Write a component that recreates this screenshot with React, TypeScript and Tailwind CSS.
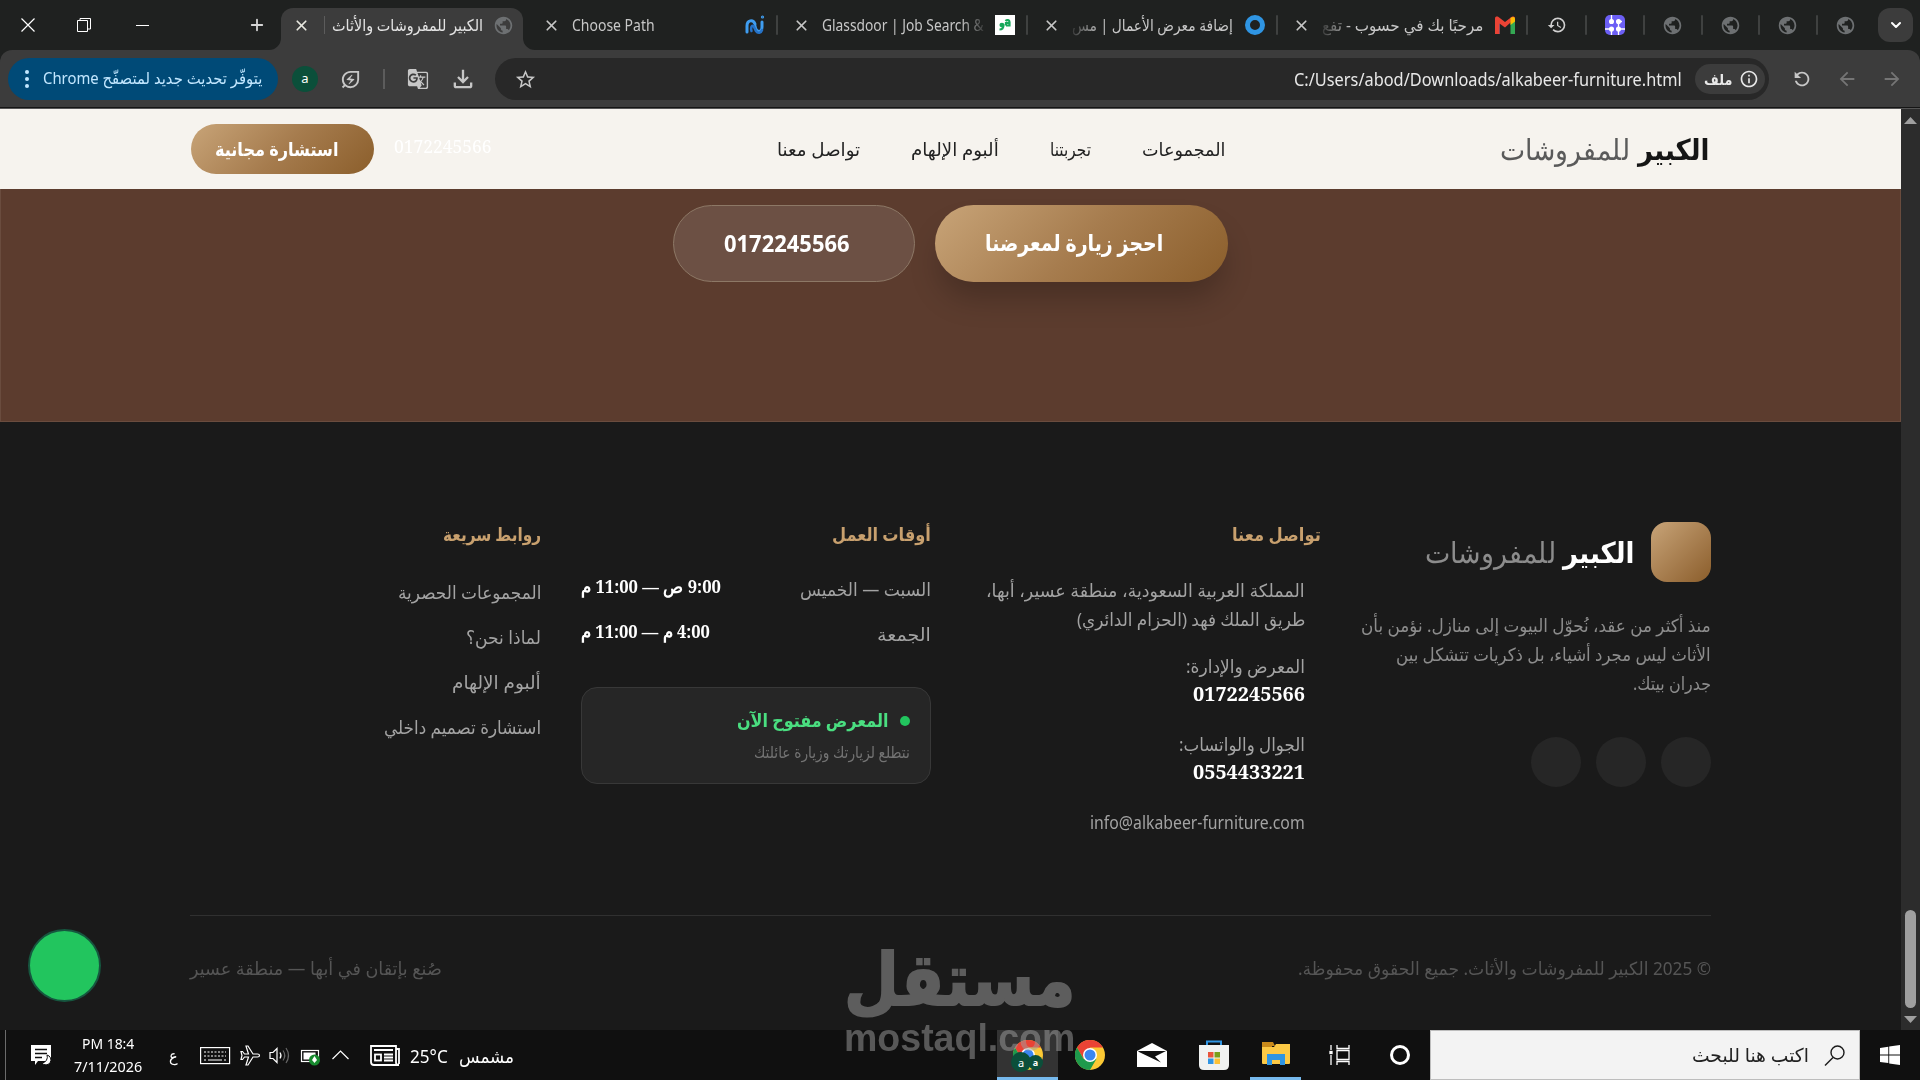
import React, { useLayoutEffect, useRef, useState } from 'react';
import {
  MdArrowBack,
  MdArrowForward,
  MdGTranslate,
  MdHistory,
  MdInfoOutline,
  MdOutlineEnergySavingsLeaf,
  MdOutlineFileDownload,
  MdPublic,
  MdRefresh,
  MdStarBorder,
} from 'react-icons/md';
import { ChevronDown, Plus, X } from 'lucide-react';

type FitProps = { className?: string; dir?: 'rtl' | 'ltr'; children: React.ReactNode };

// single line of text squeezed or stretched to the width of its box
const Fit: React.FC<FitProps> = ({ className = '', dir = 'rtl', children }) => {
  const box = useRef<HTMLSpanElement>(null);
  const inner = useRef<HTMLSpanElement>(null);
  const [ratio, setRatio] = useState(1);

  useLayoutEffect(() => {
    if (box.current && inner.current && inner.current.offsetWidth > 0) {
      setRatio(box.current.offsetWidth / inner.current.offsetWidth);
    }
  }, []);

  return (
    <span ref={box} dir={dir} className={`block shrink-0 whitespace-nowrap ${className}`}>
      <span
        ref={inner}
        className={`inline-block ${dir === 'rtl' ? 'origin-right' : 'origin-left'}`}
        style={{ transform: `scaleX(${ratio})` }}
      >
        {children}
      </span>
    </span>
  );
};

const Separator = () => <span className="h-5 w-0.5 shrink-0 rounded bg-[#3f4140]" />;

type TabProps = { icon: React.ReactNode; children: React.ReactNode };

const Tab: React.FC<TabProps> = ({ icon, children }) => (
  <div className="flex h-[50px] w-[248px] shrink-0 items-center pl-[15px] text-[#c7c7c7]">
    <X size={17} strokeWidth={2.4} className="mr-[12px] shrink-0" />
    <div className="flex w-[164px] shrink-0 overflow-hidden">{children}</div>
    <div className="ml-[7px] flex w-6 shrink-0 justify-center">{icon}</div>
  </div>
);

const GmailIcon = () => (
  <svg width="20" height="18" viewBox="0 0 20 18">
    <path d="M0 3v15h4.5V7z" fill="#4285f4" />
    <path d="M15.500 6.500L20 3v15h-4.500z" fill="#34a853" />
    <path d="M0 2.500C0 .5 2 0 3.500 1L10 6l6.500-5C18 0 20 .5 20 2.500L10 11.500 4.500 7.500V18H0z" fill="#ea4335" />
    <path d="M15.500 1.800Q20-.5 20 3v2.500l-4.500 3.500z" fill="#fbbc04" />
  </svg>
);

const NIcon = () => (
  <svg width="20" height="20" viewBox="0 0 20 20" fill="none" strokeLinecap="round">
    <path d="M2 17v-6c0-6 6-7 8-2M10 11c1 7 7 7 7 1V7" stroke="#3f9df0" strokeWidth="3" />
    <path d="M6.500 16c-1-3 0-6 2-5l2.500 5c2 3 5 2 6-1" stroke="#2673c8" strokeWidth="2.500" />
    <circle cx="17.500" cy="2" r=".6" stroke="#3f9df0" strokeWidth="2" />
  </svg>
);

const NodesIcon = () => (
  <svg width="20" height="20" viewBox="0 0 20 20">
    <rect width="20" height="20" rx="5" fill="#6c5ff5" />
    <g stroke="#fff" strokeWidth="1.300" fill="#fff">
      <path d="M6.500 0v6.500M6.500 14v6M13.500 6.500V20M0 14h6.500M13.500 14H20M13.500 6.500H17" fill="none" />
      <circle cx="6.500" cy="6.500" r="1.900" />
      <circle cx="13.500" cy="6.500" r="1.900" />
      <circle cx="6.500" cy="14" r="1.900" />
      <circle cx="13.500" cy="14" r="1.900" />
    </g>
  </svg>
);

const TabStrip = () => (
  <div className="flex h-[50px] shrink-0 items-center bg-[#1f2120]">
    <div className="flex w-14 shrink-0 justify-center">
      <svg width="14" height="14" viewBox="0 0 14 14" stroke="#fff" strokeWidth="1.200">
        <path d="M.5.5l13 13M13.500.5L.5 13.500" />
      </svg>
    </div>
    <div className="flex w-14 shrink-0 justify-center">
      <svg width="14" height="14" viewBox="0 0 14 14" stroke="#fff" fill="none">
        <path d="M.5 2.500h10v11H.5zM3 2.500V.5h10.500v10.500H10.500" />
      </svg>
    </div>
    <div className="flex w-[60px] shrink-0 justify-center">
      <span className="h-px w-[13px] bg-white" />
    </div>
    <div className="flex w-[109px] shrink-0 justify-end pr-[15px]">
      <Plus size={18} strokeWidth={2.4} className="text-[#d5d5d5]" />
    </div>
    <div className="relative flex h-[42px] w-[242px] shrink-0 items-center self-end rounded-t-[12px] bg-[#3c3c3c] pb-2 pl-[12px] text-white">
      <svg className="absolute bottom-0 -left-[12px]" width="12" height="12">
        <path d="M12 0v12H0A12 12 0 0 0 12 0z" fill="#3c3c3c" />
      </svg>
      <svg className="absolute -right-[12px] bottom-0" width="12" height="12">
        <path d="M0 0v12h12A12 12 0 0 1 0 0z" fill="#3c3c3c" />
      </svg>
      <X size={17} strokeWidth={2.4} className="shrink-0 text-[#e8e8e0]" />
      <span className="ml-[14px] h-[18px] w-px bg-[#5c5c5c]" />
      <Fit className="ml-[7px] w-[151px] text-[16px] text-[#e3e3e3]">الكبير للمفروشات والأثاث</Fit>
      <MdPublic size={21} className="ml-[10px] shrink-0 text-[#6d7072]" />
    </div>
    <div className="flex shrink-0 items-center pl-[5px]">
      <Tab icon={<NIcon />}>
        <Fit dir="ltr" className="w-[83px] text-[16px]">
          Choose Path
        </Fit>
      </Tab>
      <Separator />
      <Tab
        icon={
          <span className="flex h-5 w-5 items-center justify-center bg-white">
            <svg width="14" height="14" viewBox="0 0 14 14" fill="none" stroke="#17a85b" strokeWidth="2.200">
              <path d="M1.500 11.500c3 0 4-2 4-4.500 0-1.500-3-1.500-3 0s3 1.500 3 0M8 7.500h3.500V4c0-2-2.500-2.500-4-1M8 7.500V5h3" />
            </svg>
          </span>
        }
      >
        <Fit
          dir="ltr"
          className="w-[162px] [mask-image:linear-gradient(to_right,#000_86%,rgba(0,0,0,0.15))] text-[16px]"
        >
          Glassdoor | Job Search &amp;
        </Fit>
      </Tab>
      <Separator />
      <Tab icon={<span className="h-5 w-5 rounded-full border-[5px] border-[#2f95e3]" />}>
        <Fit className="w-[161px] [mask-image:linear-gradient(to_left,#000_82%,rgba(0,0,0,0.15))] text-[16px]">
          إضافة معرض الأعمال | مس
        </Fit>
      </Tab>
      <Separator />
      <Tab icon={<GmailIcon />}>
        <Fit className="w-[161px] [mask-image:linear-gradient(to_left,#000_82%,rgba(0,0,0,0.15))] text-[16px]">
          مرحبًا بك في حسوب - تفع
        </Fit>
      </Tab>
      <Separator />
    </div>
    <div className="flex shrink-0 items-center pl-px">
      <span className="flex w-[56px] justify-center">
        <MdHistory size={20} className="text-[#d0d0d0]" />
      </span>
      <Separator />
      <span className="flex w-[56px] justify-center">
        <NodesIcon />
      </span>
      {[0, 1, 2, 3].map((i) => (
        <React.Fragment key={i}>
          <Separator />
          <span className="flex w-[55.5px] justify-center">
            <MdPublic size={21} className="text-[#6d7072]" />
          </span>
        </React.Fragment>
      ))}
    </div>
    <div className="mr-[7px] ml-auto flex h-[34px] w-[35px] shrink-0 items-center justify-center rounded-[12px] bg-[#3c3c3c]">
      <ChevronDown size={16} strokeWidth={3} className="text-white" />
    </div>
  </div>
);

const Toolbar = () => (
  <div className="h-[59px] shrink-0 bg-[#1f2120]">
    <div className="flex h-[59px] items-center rounded-t-[12px] border-b border-[#555] bg-[#3c3c3c] pl-2 text-[#c7c7c7] shadow-[inset_0_-1px_0_#151515]">
      <div className="flex h-[42px] w-[270px] shrink-0 items-center rounded-full bg-[#004a77] pl-[17px]">
        <div className="flex flex-col gap-[3px]">
          <span className="h-1 w-1 rounded-full bg-[#c2e7ff]" />
          <span className="h-1 w-1 rounded-full bg-[#c2e7ff]" />
          <span className="h-1 w-1 rounded-full bg-[#c2e7ff]" />
        </div>
        <Fit className="ml-[14px] w-[219px] pb-0.5 text-[16px] text-[#c2e7ff]">يتوفّر تحديث جديد لمتصفّح Chrome</Fit>
      </div>
      <span className="ml-[14px] flex h-[26px] w-[26px] shrink-0 items-center justify-center rounded-full bg-[#0b4f3a] pb-px text-[13px] text-white">
        a
      </span>
      <MdOutlineEnergySavingsLeaf size={23} className="ml-[21px] shrink-0" />
      <span className="ml-[21px] h-5 w-0.5 shrink-0 bg-[#5c5c5c]" />
      <MdGTranslate size={22} className="ml-[22px] shrink-0" />
      <MdOutlineFileDownload size={28} className="ml-[20px] shrink-0" />
      <div className="ml-[18px] flex h-[42px] w-[1274px] shrink-0 items-center rounded-full bg-[#282828] pl-[19px]">
        <MdStarBorder size={23} className="shrink-0" />
        <Fit dir="ltr" className="ml-[757px] w-[388px] text-[18px] text-[#e8e8e8]">
          C:/Users/abod/Downloads/alkabeer-furniture.html
        </Fit>
        <div className="ml-[13px] flex h-[30px] w-[70px] items-center rounded-full bg-[#3c3c3c] pl-[9px] text-[#e8e8e8]">
          <Fit className="w-[28px] text-[15px] font-bold">ملف</Fit>
          <MdInfoOutline size={20} className="ml-[7px]" />
        </div>
      </div>
      <MdRefresh size={22} className="ml-[22px] shrink-0 -scale-x-100" />
      <MdArrowBack size={22} className="ml-[23px] shrink-0 text-[#757575]" />
      <MdArrowForward size={22} className="ml-[23px] shrink-0 text-[#757575]" />
    </div>
  </div>
);

const SiteHeader = () => (
  <header dir="rtl" className="flex h-20 items-center bg-[#f6f3ee] pr-[192px]">
    <div className="flex w-[209px] shrink-0 items-center gap-2 text-[29px]">
      <Fit className="w-[71px] font-bold text-[#151515]">الكبير</Fit>
      <Fit className="w-[130px] font-extralight text-[#5a5a5a]">للمفروشات</Fit>
    </div>
    <nav className="mr-[275px] flex shrink-0 gap-[51px] pt-px text-[18px] text-[#222]">
      <Fit className="w-[83px]">المجموعات</Fit>
      <Fit className="w-[41px]">تجربتنا</Fit>
      <Fit className="w-[88px]">ألبوم الإلهام</Fit>
      <Fit className="w-[83px]">تواصل معنا</Fit>
    </nav>
    <Fit
      dir="ltr"
      className="mr-[285px] w-[98px] pb-[5px] font-['Noto_Serif','DejaVu_Serif',serif] text-[18px] text-white"
    >
      0172245566
    </Fit>
    <div className="mr-5 flex h-[50px] w-[183px] shrink-0 items-center rounded-full bg-[linear-gradient(135deg,#c8a478,#a67c4e_50%,#8b5e2b)] pr-[35px]">
      <Fit className="w-[124px] text-[19px] font-bold text-white">استشارة مجانية</Fit>
    </div>
  </header>
);

const CallToAction = () => (
  <section
    dir="rtl"
    className="flex h-[233px] items-start border-x border-b border-[#6a4c3e] bg-[#5c3c2e] pt-4 pr-[672px] text-[23px] font-bold text-white"
  >
    <div className="flex h-[77px] w-[293px] shrink-0 items-center rounded-full bg-[linear-gradient(135deg,#c8a478,#a67c4e_50%,#8b5e2b)] pr-[65px] pb-0.5 shadow-[0_20px_30px_-4px_rgba(0,0,0,0.22)]">
      <Fit className="w-[178px]">احجز زيارة لمعرضنا</Fit>
    </div>
    <div className="mr-5 flex h-[77px] w-[242px] shrink-0 items-center rounded-full border border-[#8d7866] bg-[#6c5044] pr-[64px]">
      <Fit dir="ltr" className="w-[126px]">
        0172245566
      </Fit>
    </div>
  </section>
);

const serifBold = "font-['Noto_Serif','DejaVu_Serif',serif] font-bold text-white";

const Brand = () => (
  <div className="w-[390px] shrink-0">
    <div className="flex h-[60px] items-center">
      <span className="h-[60px] w-[60px] rounded-2xl bg-gradient-to-br from-[#c8a478] to-[#8b5e2b]" />
      <Fit className="mr-[17px] w-[71px] text-[29px] font-bold text-white">الكبير</Fit>
      <Fit className="mr-[7px] w-[131px] text-[29px] font-extralight text-[#8c8c8c]">للمفروشات</Fit>
    </div>
    <div className="mt-[29px] flex flex-col text-[18px] leading-[29px] text-[#8c8c8c]">
      <Fit className="w-[350px]">منذ أكثر من عقد، نُحوّل البيوت إلى منازل. نؤمن بأن</Fit>
      <Fit className="w-[315px]">الأثاث ليس مجرد أشياء، بل ذكريات تتشكل بين</Fit>
      <Fit className="w-[78px]">جدران بيتك.</Fit>
    </div>
    <div className="mt-[39px] flex gap-[15px]">
      <span className="h-[50px] w-[50px] rounded-full bg-[#262626]" />
      <span className="h-[50px] w-[50px] rounded-full bg-[#262626]" />
      <span className="h-[50px] w-[50px] rounded-full bg-[#262626]" />
    </div>
  </div>
);

const Contact = () => (
  <div className="-mt-0.5 w-[390px] shrink-0 text-[18px] leading-[29px] text-[#a3a3a3]">
    <Fit className="w-[89px] font-bold text-[#c8a06e]">تواصل معنا</Fit>
    <div className="mt-[27px] pr-4">
      <Fit className="w-[319px]">المملكة العربية السعودية، منطقة عسير، أبها،</Fit>
      <Fit className="w-[228px]">طريق الملك فهد (الحزام الدائري)</Fit>
      <Fit className="mt-[18px] w-[119px]">المعرض والإدارة:</Fit>
      <Fit dir="ltr" className={`w-[112px] text-[20px] leading-[25px] ${serifBold}`}>
        0172245566
      </Fit>
      <Fit className="mt-[24px] w-[126px]">الجوال والواتساب:</Fit>
      <Fit dir="ltr" className={`w-[112px] text-[20px] leading-[25px] ${serifBold}`}>
        0554433221
      </Fit>
      <Fit dir="ltr" className="mt-[24px] w-[215px]">
        info@alkabeer-furniture.com
      </Fit>
    </div>
  </div>
);

const Hours = () => (
  <div className="-mt-0.5 w-[390px] shrink-0 pl-[40px] text-[18px] leading-[29px] text-[#a3a3a3]">
    <Fit className="w-[99px] font-bold text-[#c8a06e]">أوقات العمل</Fit>
    <div className="mt-[26px] flex h-[29px] items-center justify-between">
      <Fit className="w-[131px]">السبت — الخميس</Fit>
      <Fit className={`w-[140px] pb-[6px] text-[18px] ${serifBold}`}>9:00 ص — 11:00 م</Fit>
    </div>
    <div className="mt-4 flex h-[29px] items-center justify-between">
      <Fit className="w-[54px]">الجمعة</Fit>
      <Fit className={`w-[129px] pb-[6px] text-[18px] ${serifBold}`}>4:00 م — 11:00 م</Fit>
    </div>
    <div className="mt-[38px] h-[97px] w-[350px] rounded-2xl border border-[#383838] bg-[#262626] pt-[18px] pr-[20px]">
      <div className="flex items-center gap-[11px]">
        <span className="h-[10px] w-[10px] rounded-full bg-[#22c55e]" />
        <Fit className="w-[152px] font-bold text-[#4ade80]">المعرض مفتوح الآن</Fit>
      </div>
      <Fit className="mt-[4px] w-[156px] text-[16px] leading-[26px] text-[#737373]">نتطلع لزيارتك وزيارة عائلتك</Fit>
    </div>
  </div>
);

const QuickLinks = () => (
  <div className="-mt-0.5 shrink-0 text-[18px] leading-[29px] text-[#a3a3a3]">
    <Fit className="w-[98px] font-bold text-[#c8a06e]">روابط سريعة</Fit>
    <div className="mt-[29px] flex flex-col gap-4">
      <Fit className="w-[143px]">المجموعات الحصرية</Fit>
      <Fit className="w-[75px]">لماذا نحن؟</Fit>
      <Fit className="w-[89px]">ألبوم الإلهام</Fit>
      <Fit className="w-[157px]">استشارة تصميم داخلي</Fit>
    </div>
  </div>
);

const Footer = () => (
  <footer dir="rtl" className="h-[608px] bg-[#1a1a1a] px-[190px] pt-[100px]">
    <div className="flex h-[393px]">
      <Brand />
      <Contact />
      <Hours />
      <QuickLinks />
    </div>
    <div className="flex h-[106px] items-center justify-between border-t border-[#303030] text-[18px] text-[#555]">
      <Fit className="w-[413px]">© 2025 الكبير للمفروشات والأثاث. جميع الحقوق محفوظة.</Fit>
      <Fit className="w-[252px]">صُنع بإتقان في أبها — منطقة عسير</Fit>
    </div>
  </footer>
);

const Scrollbar = () => (
  <div className="flex w-[19px] shrink-0 flex-col items-center bg-[#2c2c2c] pt-2 pb-[7px]">
    <svg width="13" height="7">
      <path d="M0 7h13L6.500 0z" fill="#9f9f9f" />
    </svg>
    <span className="mt-auto h-[98px] w-[11px] rounded-full bg-[#9f9f9f]" />
    <svg className="mt-2" width="13" height="7">
      <path d="M0 0h13L6.500 7z" fill="#9f9f9f" />
    </svg>
  </div>
);

const ChromeIcon = () => (
  <svg width="30" height="30" viewBox="0 0 30 30">
    <circle cx="15" cy="15" r="15" fill="#fcc934" />
    <path d="M2 7.500A15 15 0 0 1 28 7.500H15L8.500 18.700z" fill="#ea4335" />
    <path d="M2 7.500A15 15 0 0 0 15 30l6.500-11.300H8.500z" fill="#1e9a4c" />
    <circle cx="15" cy="15" r="7" fill="#fff" />
    <circle cx="15" cy="15" r="5.500" fill="#3b86f0" />
  </svg>
);

const TrayIcons = () => (
  <svg width="150" height="24" viewBox="0 0 150 24" fill="none" stroke="#fff" strokeWidth="1.200">
    {/* keyboard */}
    <rect x=".6" y="4.600" width="29" height="16" />
    <path d="M4 9h22M4 13h22" strokeDasharray="2 1.500" />
    <path d="M4 17h2M8 17h14M24 17h2" />
    {/* airplane */}
    <path d="M59.500 12.500c0-1-1-1.500-2-1.500h-4.500l-5-8h-2l2.500 8h-4l-2-2.500h-1.500l1 4-1 4h1.500l2-2.500h4L46 22h2l5-8h4.500c1 0 2-.5 2-1.500z" />
    {/* volume */}
    <path d="M70 9.500h3l4-4v14l-4-4h-3zM80 9.500q2 3 0 6" />
    <path d="M83 7.500q3.500 5 0 10M86 5q5 7.500 0 15" stroke="#666" />
    {/* battery */}
    <rect x="101.500" y="7.500" width="17" height="11" />
    <rect x="103.500" y="9.500" width="12" height="7" fill="#fff" stroke="none" />
    <circle cx="114.500" cy="17" r="5.500" fill="#178a2e" stroke="none" />
    <path d="M114.500 13l2.500 4-2.500 3-2.500-3z" fill="#fff" stroke="none" />
    {/* overflow chevron */}
    <path d="M132.500 16l8-8 8 8" />
  </svg>
);

const Taskbar = () => (
  <div className="flex h-[50px] shrink-0 items-center bg-[#101010] text-white">
    <span className="ml-[5px] h-full w-px shrink-0 bg-[#6b6b6b]" />
    <svg className="ml-[25px] shrink-0" width="21" height="22" viewBox="0 0 21 22">
      <path d="M0 1h20v16H7l-3 4v-4H0z" fill="#fff" />
      <path d="M4 5.500h12M4 9.500h12M4 13.500h7" stroke="#101010" strokeWidth="1.300" />
      <path d="M16 11a5 5 0 1 1-5 8 6 6 0 0 0 5-8z" fill="#fff" stroke="#101010" />
    </svg>
    <div className="ml-[22px] flex w-[68px] shrink-0 flex-col items-center text-[15px] leading-[23px]">
      <Fit dir="ltr" className="w-[52px]">
        PM 18:4
      </Fit>
      <Fit dir="ltr" className="w-[68px]">
        7/11/2026
      </Fit>
    </div>
    <Fit className="ml-[27px] w-[9px] text-[16px]">ع</Fit>
    <div className="ml-[22px] shrink-0">
      <TrayIcons />
    </div>
    <svg className="ml-[20px] shrink-0" width="30" height="21" viewBox="0 0 30 21" fill="none" stroke="#fff" strokeWidth="1.800">
      <path d="M1 1h25v16.500q0 2.500 3 2.500H4q-3 0-3-3zM26 4h3v15" />
      <path d="M4 5h19M14 9.500h9M14 12.500h9M14 15.500h9" />
      <rect x="5" y="9.500" width="6" height="6" />
    </svg>
    <Fit dir="ltr" className="ml-[10px] w-[38px] pt-0.5 text-[18px]">
      25°C
    </Fit>
    <Fit className="ml-[11px] w-[55px] pt-0.5 text-[18px]">مشمس</Fit>
    <div className="relative ml-[483px] flex h-[50px] w-[61px] shrink-0 items-center justify-center border-b-[3px] border-[#76b9ed] bg-[#333] pt-[3px]">
      <ChromeIcon />
      <span className="absolute top-[22px] left-[14px] flex h-5 w-5 items-center justify-center rounded-full bg-[#0b4f3a] text-[11px] leading-none">
        a
      </span>
      <span className="absolute top-[25px] left-[31px] flex h-[15px] w-[15px] items-center justify-center rounded-full bg-[#0b4f3a] text-[9px] leading-none font-bold">
        a
      </span>
    </div>
    <div className="ml-[17px] shrink-0">
      <ChromeIcon />
    </div>
    <svg className="ml-[32px] shrink-0" width="30" height="24" viewBox="0 0 30 24">
      <path d="M0 8l15-8 15 8v16H0z" fill="#fff" />
      <path d="M1 8h28l-11 5.500 6 6L2 9z" fill="#101010" />
    </svg>
    <svg className="ml-[32px] shrink-0" width="30" height="30" viewBox="0 0 30 30">
      <path d="M8 7V1.500h14V7" fill="none" stroke="#2f95e3" strokeWidth="2" />
      <path d="M0 5h30v20q0 5-5 5H5q-5 0-5-5z" fill="#f0f2f1" />
      <path d="M9 12h5.500v5.500H9z" fill="#e8543c" />
      <path d="M15.500 12H21v5.500h-5.500z" fill="#7a9f1b" />
      <path d="M9 18.500h5.500V24H9z" fill="#2f95e3" />
      <path d="M15.500 18.500H21V24h-5.500z" fill="#fcc135" />
    </svg>
    <div className="ml-[21px] flex h-[50px] w-[51px] shrink-0 items-center justify-center border-b-[3px] border-[#76b9ed]">
      <svg width="28" height="24" viewBox="0 0 28 24">
        <path d="M0 0h11l2 4h-3v5H0z" fill="#c98a1b" />
        <path d="M0 5h12l2-3h14v19q0 1-1 1H1q-1 0-1-1z" fill="#fcc945" />
        <path d="M5 23V12h18v11h-5v-5h-8v5z" fill="#2f95e3" />
      </svg>
    </div>
    <svg className="ml-[28px] shrink-0" width="22" height="20" viewBox="0 0 22 20" fill="none" stroke="#fff" strokeWidth="1.300">
      <path d="M2 0v5M2 10v10M8 0v3.500h12V0M8 20v-3.500h12V20M8 5.500h12v9H8z" />
      <rect x="1" y="6.500" width="2" height="2" fill="#fff" />
    </svg>
    <span className="ml-[39px] h-5 w-5 shrink-0 rounded-full border-[3px] border-white" />
    <div dir="rtl" className="ml-auto flex h-[50px] w-[430px] shrink-0 items-center border border-[#bdbdbd] bg-[#f3f3f3] pr-[14px]">
      <svg width="21" height="21" viewBox="0 0 21 21" fill="none" stroke="#1a1a1a" strokeWidth="1.400">
        <circle cx="13.500" cy="7.500" r="6.500" />
        <path d="M9 12.500L1 20.500" />
      </svg>
      <Fit className="mr-[15px] w-[117px] text-[19px] text-[#222]">اكتب هنا للبحث</Fit>
    </div>
    <svg className="mx-5 shrink-0" width="20" height="20" viewBox="0 0 20 20" fill="#fff">
      <path d="M0 3l8.300-1.300v7.700H0zM9.200 1.500L20 0v9.400H9.200zM0 10.400h8.300v7.700L0 17zM9.200 10.400H20V20L9.200 18.400z" />
    </svg>
  </div>
);

const Watermark = () => (
  <div className="absolute top-[936px] left-[844px] w-[232px] text-[#a0a0a0] opacity-50">
    <Fit className="w-[231px] text-[72px] leading-[82px] font-black [-webkit-text-stroke:2px_#a0a0a0]">مستقل</Fit>
    <Fit dir="ltr" className="w-[231px] font-['Liberation_Sans',sans-serif] text-[38px] leading-[40px] font-bold">
      mostaql.com
    </Fit>
  </div>
);

export default function App() {
  return (
    <div className="relative flex h-[1080px] w-[1920px] flex-col overflow-hidden bg-[#1a1a1a] font-['Noto_Sans','DejaVu_Sans',sans-serif]">
      <TabStrip />
      <Toolbar />
      <div className="flex h-[921px] shrink-0">
        <main className="w-[1901px] shrink-0">
          <SiteHeader />
          <CallToAction />
          <Footer />
        </main>
        <Scrollbar />
      </div>
      <Taskbar />
      <span className="absolute top-[929px] left-[28px] h-[73px] w-[73px] rounded-full border-2 border-[#16563f] bg-[#22c55e]" />
      <Watermark />
    </div>
  );
}
